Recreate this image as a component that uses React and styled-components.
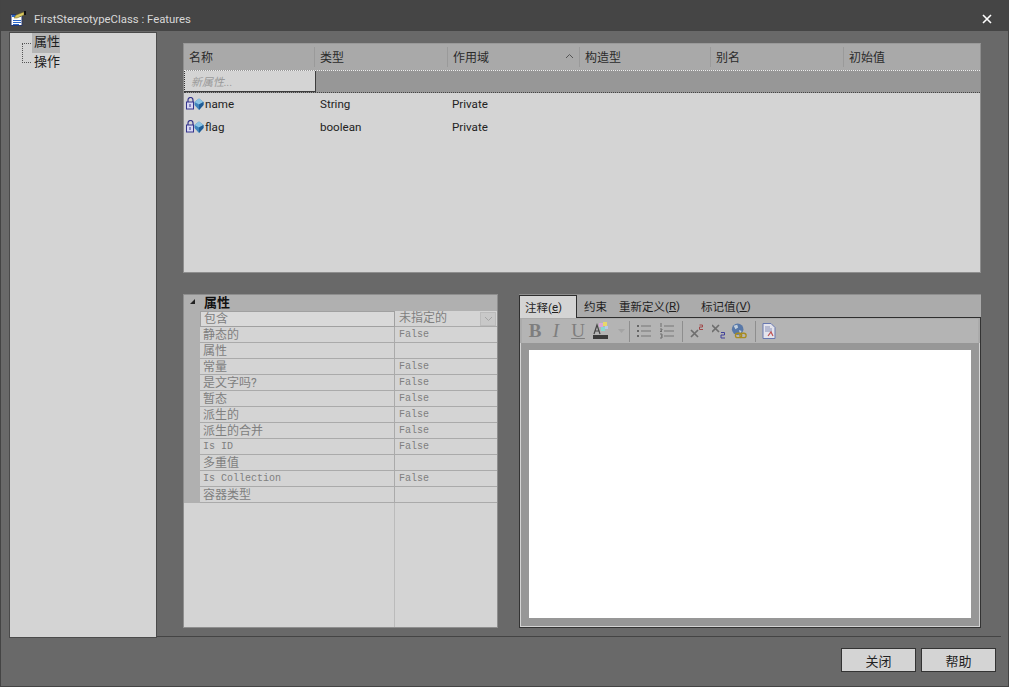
import React from "react";
import styled, { createGlobalStyle } from "styled-components";

const G = createGlobalStyle`
  html, body { margin: 0; padding: 0; background: #696969; }
  * { box-sizing: border-box; }
`;
const CJK = `Roboto, "Noto Sans CJK SC", sans-serif`;

const Win = styled.div`
  width: 1009px; height: 687px; display: flex; flex-direction: column;
  background: #696969; border: 1px solid #444; border-top: 0; font-family: ${CJK}; font-size: 12px; color: #222; overflow: hidden;
`;
const TitleBar = styled.div`
  height: 31px; flex: none; background: #454545; display: flex; align-items: center; padding: 6px 16px 0 9px; gap: 7px; color: #d8d8d8; font-size: 11.35px;
`;
const TitleText = styled.span` flex: 1; `;
const Body = styled.div` flex: 1; display: flex; padding: 1px 7px 0 8px; min-height: 0; `;
const Tree = styled.div`
  width: 148px; height: 606px; flex: none; background: #d4d4d4; border: 1px solid #4a4a4a; padding: 0 0 0 22px; position: relative;
`;
const TreeRow = styled.div`
  height: 20px; display: flex; align-items: center; width: 28px; padding: 0 0 6px 2px; background: ${p => p.$sel ? "#b4b4b4" : "transparent"}; font-size: 13px; color: #1d1d1d;
`;
const TreeDots = styled.div`
  position: absolute; left: 12px; top: 10px; width: 9px; height: 20px; border: 1px dotted #555; border-right: 0;
`;
const Main = styled.div` flex: 1; min-width: 0; display: flex; flex-direction: column; `;
const Content = styled.div` height: 605px; flex: none; padding: 11px 20px 0 26px; display: flex; flex-direction: column; gap: 21px; border-bottom: 1px solid #444; `;
const ListPanel = styled.div` height: 230px; flex: none; background: #d4d4d4; border: 1px solid #8e8e8e; border-top-color: #9a9a9a; `;
const HeadRow = styled.div` height: 26px; background: #a9a9a9; display: grid; grid-template-columns: 131px 133px 132px 131px 133px 1fr; `;
const HeadCell = styled.div`
  padding: 0 0 2px 5px; display: flex; align-items: center; justify-content: space-between; position: relative; color: #2b2b2b; font-size: 12px;
  &:not(:last-child) { border-right: 1px solid #9a9a9a; }
  margin: 3px 0;
`;
const NewRow = styled.div` height: 23px; background: #979797; border-top: 1px dotted #eee; border-bottom: 1px dotted #444; display: flex; `;
const NewCell = styled.div` width: 132px; background: #d4d4d4; border: 1px solid #3d3d3d; border-top: 0; border-left: 1px dotted #333; color: #9a9a9a; font-style: italic; font-size: 11px; padding-left: 6px; display: flex; align-items: center; `;
const DataRow = styled.div` height: 23px; padding-bottom: 2px; display: grid; grid-template-columns: 132px 132px 132px 1fr; align-items: center; font-size: 11.6px; color: #222; `;
const NameCell = styled.div` display: flex; align-items: center; gap: 1px; padding-left: 1px; `;
const DataCell = styled.div` padding-left: 4px; `;

const Lower = styled.div` display: flex; gap: 21px; height: 334px; flex: none; `;
const Props = styled.div` width: 315px; background: #d4d4d4; border: 1px solid #8e8e8e; display: flex; flex-direction: column; position: relative; `;
const PropHead = styled.div` height: 16px; background: #b0b0b0; display: flex; align-items: center; gap: 8px; padding: 0 0 3px 5px; font-weight: 700; font-size: 13px; color: #111; flex: none; `;
const PropRow = styled.div` display: grid; grid-template-columns: 16px 195px 1fr; height: 16px; flex: none; `;
const Gutter = styled.div` background: #b0b0b0; `;
const PropName = styled.div`
  border-bottom: 1px solid #aaa; border-right: 1px solid #aaa; color: #7f7f7f; font-size: 12px; line-height: 14px; padding: 1px 0 0 3px; white-space: nowrap;
  font-family: ${p => p.$mono ? `"Liberation Mono", monospace` : CJK};
  ${p => p.$mono ? "font-size: 10px; padding-top: 0; line-height: 15px;" : ""}
  ${p => p.$sel ? "border: 1px solid #a0a0a0; background: #d9d9d9; padding-top: 0;" : ""}
`;
const PropVal = styled.div`
  border-bottom: 1px solid #aaa; color: #7f7f7f; font-family: "Liberation Mono", monospace; font-size: 10px; line-height: 15px; padding-left: 4px; position: relative;
  display: flex; align-items: center; justify-content: space-between; padding-right: 1px;
`;
const ValCn = styled.span` font-family: ${CJK}; font-size: 12px; `;
const Combo = styled.span` width: 16px; height: 14px; background: #c8c8c8; border: 1px solid #bbb; display: flex; align-items: center; justify-content: center; `;
const PropFill = styled.div` flex: 1; display: grid; grid-template-columns: 211px 1fr; `;
const FillL = styled.div` border-right: 1px solid #bbb; `;

const Notes = styled.div` width: 462px; display: flex; flex-direction: column; background: #ababab; border: 1px solid #333; border-top: 0; `;
const Tabs = styled.div` height: 24px; flex: none; background: #ababab; display: flex; align-items: stretch; border-top: 1px solid #8e8e8e; margin: 0 -1px; border-bottom: 1px solid #2e2e2e; `;
const Tab = styled.div`
  display: flex; align-items: center; font-size: 11.5px; color: #1f1f1f; padding: 0 0 0 ${p => p.$pad}px; white-space: nowrap;
  ${p => p.$active ? "background: #d4d4d4; border: 1px solid #2e2e2e; border-bottom: 0; margin-bottom: -1px; width: 58px; padding-left: 5px;" : ""}
  u { text-underline-offset: 1px; }
`;
const Toolbar = styled.div` height: 24px; flex: none; background: #b4b4b4; margin: 1px 2px 0; display: flex; align-items: center; padding-left: 3px; `;
const Btn = styled.div` width: ${p => p.$w}px; height: 22px; flex: none; display: flex; align-items: center; justify-content: center; font-family: "Liberation Serif", serif; font-size: 19px; color: #7e7e7e; `;
const Sep = styled.div` width: 1px; height: 21px; flex: none; background: #8e8e8e; margin: 0 ${p => p.$r}px 0 ${p => p.$l}px; `;
const EditorWrap = styled.div` flex: 1; background: #979797; padding: 7px 8px 8px 8px; border: solid #d4d4d4; border-width: 0 1px 1px 1px; display: flex; `;
const Editor = styled.div` flex: 1; background: #fff; `;

const Footer = styled.div` flex: 1; display: flex; justify-content: flex-end; gap: 5px; padding: 11px 5px 0 0; `;
const Button = styled.div` width: 75px; height: 24px; background: #d4d4d4; border: 1px solid #333; display: flex; align-items: center; justify-content: center; font-size: 13px; color: #222; `;

const AppIcon = () => (
  <svg width="17" height="16" viewBox="0 0 17 16">
    <path d="M1 3.500h11v11H1z" fill="#fff" stroke="#26366a" />
    <rect x="2" y="4" width="9" height="2" fill="#2a66c8" />
    <path d="M3 9.500h8M3 11.500h8M3 13.500h6" stroke="#2a66c8" />
    <path d="M4 7l2-3 8-3v3l-7 3z" fill="#d8c860" stroke="#6a5a20" strokeWidth=".5" />
    <rect x="14" y="0" width="2" height="4" fill="#111" />
  </svg>
);
const LockGem = () => (
  <svg width="19" height="13" viewBox="0 0 19 13">
    <path d="M3 5V3a2.500 2.500 0 0 1 5 0v2" fill="none" stroke="#34348c" strokeWidth="1.200" />
    <rect x="1.500" y="5" width="7" height="7" fill="#d8d8f4" stroke="#34348c" />
    <rect x="4.500" y="7" width="1" height="3" fill="#34348c" />
    <path d="M14 1.500l4.500 3.500v3L14 13 9.500 8V5z" fill="#3f84bc" />
    <path d="M14 1.500l4.500 3.500L14 7.500 9.500 5z" fill="#8cc4e4" />
    <path d="M14 7.500L18.500 5v3L14 13z" fill="#1f5c96" />
  </svg>
);
const ArrowDown = () => (
  <svg width="9" height="6" viewBox="0 0 9 6"><path d="M1 1l3.500 3.500L8 1" fill="none" stroke="#a4a4a4" /></svg>
);
const FontColor = () => (
  <svg width="16" height="18" viewBox="0 0 16 18">
    <rect x="0" y="13" width="15" height="4" fill="#3a3a3a" />
    <path d="M1 12L4 3l3 9M2.500 9h3" fill="none" stroke="#444" strokeWidth="1.200" />
    <rect x="6" y="1" width="4" height="4" fill="#d8a8d8" /><rect x="10" y="0" width="4" height="4" fill="#e8d868" />
    <rect x="8" y="5" width="4" height="4" fill="#88d8d0" /><rect x="12" y="4" width="3" height="3" fill="#b8c8e8" />
  </svg>
);
const Bullets = () => (
  <svg width="16" height="14" viewBox="0 0 16 14" fill="#666">
    <rect x="1" y="1" width="2" height="2" /><rect x="1" y="6" width="2" height="2" /><rect x="1" y="11" width="2" height="2" />
    <path d="M5 2h10M5 7h10M5 12h10" stroke="#777" />
  </svg>
);
const Numbers = () => (
  <svg width="16" height="16" viewBox="0 0 16 16">
    <path d="M3 0v4M2 6h2v1L2 8.500h2M2 11h2v4H2M3 13h1" stroke="#666" fill="none" strokeWidth=".9" />
    <path d="M6 3h10M6 8h10M6 13h10" stroke="#777" />
  </svg>
);
const Sup = () => (
  <svg width="14" height="14" viewBox="0 0 14 14">
    <path d="M1 6l7 7M8 6l-7 7" stroke="#6e6e6e" strokeWidth="1.700" />
    <path d="M9.500 1h3v2h-3v2.500h3.500" stroke="#a04848" fill="none" />
  </svg>
);
const Sub = () => (
  <svg width="14" height="15" viewBox="0 0 14 15">
    <path d="M0 1l7 7M7 1L0 8" stroke="#6e6e6e" strokeWidth="1.700" />
    <path d="M9 8.500h3.500v2.500H9v3h4" stroke="#40409a" fill="none" />
  </svg>
);
const Globe = () => (
  <svg width="18" height="18" viewBox="0 0 18 18">
    <circle cx="7.500" cy="7" r="6.500" fill="#5878a8" />
    <path d="M3 3l4-1 1 3-3 2zM9 8l3 1-2 3z" fill="#c4d0dc" />
    <rect x="5" y="11.500" width="7" height="5" rx="2.500" fill="none" stroke="#a88c20" strokeWidth="1.500" />
    <rect x="10" y="11.500" width="7" height="5" rx="2.500" fill="none" stroke="#a88c20" strokeWidth="1.500" />
  </svg>
);
const Doc = () => (
  <svg width="14" height="16" viewBox="0 0 14 16">
    <path d="M1 .5h8l4 4v11H1z" fill="#e4e4ec" stroke="#6878b0" />
    <path d="M3 4h5M3 6h7M3 8h7" stroke="#8890b8" />
    <path d="M6 13l3-4 2 4" fill="none" stroke="#c05050" strokeWidth="1.200" />
  </svg>
);

const rows = [
  ["静态的", "False"], ["属性", ""], ["常量", "False"], ["是文字吗?", "False"], ["暂态", "False"],
  ["派生的", "False"], ["派生的合并", "False"], ["Is ID", "False", true], ["多重值", ""],
  ["Is Collection", "False", true], ["容器类型", ""],
];

export default function App() {
  return (
    <Win>
      <G />
      <TitleBar>
        <AppIcon />
        <TitleText>FirstStereotypeClass : Features</TitleText>
        <svg width="10" height="10" viewBox="0 0 10 10"><path d="M1 1l8 8M9 1l-8 8" stroke="#fff" strokeWidth="1.600" /></svg>
      </TitleBar>
      <Body>
        <Tree>
          <TreeDots />
          <TreeRow $sel>属性</TreeRow>
          <TreeRow>操作</TreeRow>
        </Tree>
        <Main>
          <Content>
            <ListPanel>
              <HeadRow>
                <HeadCell>名称</HeadCell>
                <HeadCell>类型</HeadCell>
                <HeadCell>
                  作用域
                  <svg width="9" height="6" viewBox="0 0 9 6" style={{ marginRight: 5 }}><path d="M1 5l3.500-3.500L8 5" fill="none" stroke="#555" /></svg>
                </HeadCell>
                <HeadCell>构造型</HeadCell>
                <HeadCell>别名</HeadCell>
                <HeadCell>初始值</HeadCell>
              </HeadRow>
              <NewRow><NewCell>新属性...</NewCell></NewRow>
              <DataRow>
                <NameCell><LockGem />name</NameCell>
                <DataCell>String</DataCell>
                <DataCell>Private</DataCell>
              </DataRow>
              <DataRow>
                <NameCell><LockGem />flag</NameCell>
                <DataCell>boolean</DataCell>
                <DataCell>Private</DataCell>
              </DataRow>
            </ListPanel>
            <Lower>
              <Props>
                <PropHead>
                  <svg width="7" height="7" viewBox="0 0 7 7"><path d="M6 1v5H1z" fill="#222" /></svg>
                  属性
                </PropHead>
                <PropRow>
                  <Gutter />
                  <PropName $sel>包含</PropName>
                  <PropVal><ValCn>未指定的</ValCn><Combo><ArrowDown /></Combo></PropVal>
                </PropRow>
                {rows.map(([n, v, m]) => (
                  <PropRow key={n}>
                    <Gutter />
                    <PropName $mono={m}>{n}</PropName>
                    <PropVal>{v}</PropVal>
                  </PropRow>
                ))}
                <PropFill><FillL /></PropFill>
              </Props>
              <Notes>
                <Tabs>
                  <Tab $active>注释(<u>e</u>)</Tab>
                  <Tab $pad={7}>约束</Tab>
                  <Tab $pad={12}>重新定义(<u>R</u>)</Tab>
                  <Tab $pad={21}>标记值(<u>V</u>)</Tab>
                </Tabs>
                <Toolbar>
                  <Btn $w={20}><b>B</b></Btn>
                  <Btn $w={22}><i>I</i></Btn>
                  <Btn $w={22}><u>U</u></Btn>
                  <Btn $w={24}><FontColor /></Btn>
                  <Btn $w={16}><svg width="7" height="4" viewBox="0 0 7 4"><path d="M0 0h7L3.500 4z" fill="#a4a4a4" /></svg></Btn>
                  <Sep $l={0} $r={4} />
                  <Btn $w={20}><Bullets /></Btn>
                  <Btn $w={24}><Numbers /></Btn>
                  <Sep $l={4} $r={4} />
                  <Btn $w={20}><Sup /></Btn>
                  <Btn $w={24}><Sub /></Btn>
                  <Btn $w={16}><Globe /></Btn>
                  <Sep $l={8} $r={0} />
                  <Btn $w={26}><Doc /></Btn>
                </Toolbar>
                <EditorWrap><Editor /></EditorWrap>
              </Notes>
            </Lower>
          </Content>
          <Footer>
            <Button>关闭</Button>
            <Button>帮助</Button>
          </Footer>
        </Main>
      </Body>
    </Win>
  );
}
